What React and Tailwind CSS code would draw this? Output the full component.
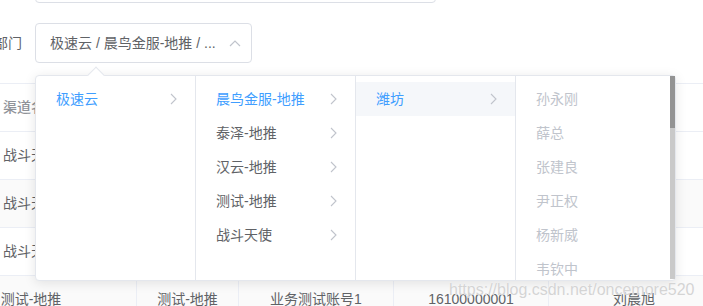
import React from "react";

const Chevron = ({ color = "#c0c4cc" }) => (
  <svg width="7" height="12" viewBox="0 0 7 12" fill="none">
    <path d="M1 1 L6 6 L1 11" stroke={color} strokeWidth="1.1" />
  </svg>
);

const Item = ({ label, state, arrow = true, hover = false }) => {
  const color =
    state === "active" ? "text-[#409eff]" : state === "disabled" ? "text-[#c0c4cc]" : "text-[#606266]";
  return (
    <div
      className={`h-[34px] pl-[20px] pr-[18px] flex items-center justify-between text-[14px] ${color} ${
        hover ? "bg-[#f5f7fa]" : ""
      }`}
    >
      <span>{label}</span>
      {arrow && <Chevron />}
    </div>
  );
};

const Row = ({ cells, striped, header }) => (
  <div
    className={`flex h-[48px] border-b border-[#ebeef5] ${striped ? "bg-[#fafafa]" : "bg-white"} ${
      header ? "text-[#909399] font-medium" : "text-[#606266]"
    } text-[14px]`}
  >
    <div className="w-[211px] shrink-0 flex items-center justify-center border-r border-[#ebeef5]">{cells[0]}</div>
    <div className="w-[102px] shrink-0 flex items-center justify-center border-r border-[#ebeef5]">{cells[1]}</div>
    <div className="w-[155px] shrink-0 flex items-center justify-center border-r border-[#ebeef5]">{cells[2]}</div>
    <div className="w-[155px] shrink-0 flex items-center justify-center border-r border-[#ebeef5]">{cells[3]}</div>
    <div className="w-[170px] shrink-0 flex items-center justify-center">{cells[4]}</div>
  </div>
);

export default function App() {
  const rowCells = ["战斗天使", "战斗天使", "业务测试账号2", "16100000002", "张三"];
  return (
    <div className="relative w-[703px] h-[306px] overflow-hidden bg-white font-['Liberation_Sans','Noto_Sans_CJK_SC',sans-serif]">
      {/* top input */}
      <div className="ml-[35px] -mt-[37px] h-[40px] w-[401px] border border-[#dcdfe6] rounded-[4px]" />

      {/* form row */}
      <div className="flex items-center mt-[20px]">
        <div className="ml-[-6px] w-[41px] pr-[13px] text-right text-[14px] text-[#606266] whitespace-nowrap">部门</div>
        <div className="w-[217px] h-[40px] border border-[#dcdfe6] rounded-[4px] pl-[14px] pr-[10px] flex items-center justify-between">
          <span className="text-[14px] text-[#606266] whitespace-nowrap">极速云 / 晨鸟金服-地推 / ...</span>
          <svg width="12" height="7" viewBox="0 0 12 7" fill="none">
            <path d="M1 6 L6 1 L11 6" stroke="#c0c4cc" strokeWidth="1.2" />
          </svg>
        </div>
      </div>

      {/* table */}
      <div className="mt-[20px] ml-[-74px] border-t border-[#ebeef5] w-[793px]">
        <Row header cells={["渠道名称", "城市", "账号名称", "手机号", "姓名"]} />
        <Row cells={rowCells} />
        <Row striped cells={rowCells} />
        <Row cells={rowCells} />
        <Row striped cells={["测试-地推", "测试-地推", "业务测试账号1", "16100000001", "刘晨旭"]} />
      </div>

      {/* cascader dropdown */}
      <div className="absolute left-[35px] top-[75px] h-[206px] w-[641px] bg-white border border-[#e4e7ed] rounded-[4px] shadow-[0_2px_12px_rgba(0,0,0,0.1)] flex">
        <div className="absolute left-[54px] top-[-7px] w-[12px] h-[12px] rotate-45 bg-white border-l border-t border-[#e4e7ed]" />
        <div className="relative w-[160px] shrink-0 border-r border-[#e4e7ed] py-[6px]">
          <Item label="极速云" state="active" />
        </div>
        <div className="w-[160px] shrink-0 border-r border-[#e4e7ed] py-[6px]">
          <Item label="晨鸟金服-地推" state="active" />
          <Item label="泰泽-地推" />
          <Item label="汉云-地推" />
          <Item label="测试-地推" />
          <Item label="战斗天使" />
        </div>
        <div className="w-[160px] shrink-0 border-r border-[#e4e7ed] py-[6px]">
          <Item label="潍坊" state="active" hover />
        </div>
        <div className="relative flex-1 overflow-hidden py-[6px]">
          <Item label="孙永刚" state="disabled" arrow={false} />
          <Item label="薛总" state="disabled" arrow={false} />
          <Item label="张建良" state="disabled" arrow={false} />
          <Item label="尹正权" state="disabled" arrow={false} />
          <Item label="杨新威" state="disabled" arrow={false} />
          <Item label="韦钦中" state="disabled" arrow={false} />
          <Item label="王晓明" state="disabled" arrow={false} />
          <div className="absolute right-0 top-0 bottom-[1px] w-[5px] bg-[#c9c9c9]">
            <div className="h-[52px] w-full bg-[#939393]" />
          </div>
        </div>
      </div>

      {/* watermark */}
      <div className="absolute left-[449px] top-[281px] text-[16px] leading-[18px] text-[#d4d4d4] font-['Liberation_Sans',sans-serif] [text-shadow:0_0_1px_#ffffff] whitespace-nowrap">
        https://blog.csdn.net/oncemore520
      </div>
    </div>
  );
}
